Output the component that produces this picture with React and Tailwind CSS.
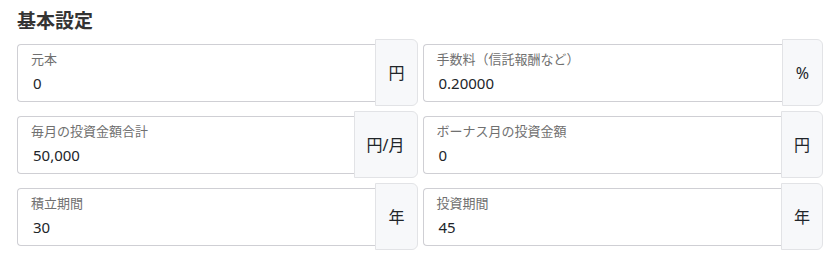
import React from "react";

const fields = [
  { label: "元本", value: "0", unit: "円" },
  { label: "手数料（信託報酬など）", value: "0.20000", unit: "%" },
  { label: "毎月の投資金額合計", value: "50,000", unit: "円/月" },
  { label: "ボーナス月の投資金額", value: "0", unit: "円" },
  { label: "積立期間", value: "30", unit: "年" },
  { label: "投資期間", value: "45", unit: "年" },
];

const Field = ({ label, value, unit }) => (
  <div className="flex items-center h-[67px]">
    <div className="flex-1 h-[58px] border border-[#cfcfd4] border-r-0 rounded-l-[4px] bg-white pl-[13px] pt-[5px]">
      <div className="text-[13px] leading-[18px] text-[#707070]">{label}</div>
      <div className="text-[15px] leading-[20px] text-[#212529] mt-[5px] pl-[2px]">{value}</div>
    </div>
    <div className="h-[67px] min-w-[41px] px-[12px] flex items-center justify-center border border-[#e2e3e6] rounded-r-[6px] bg-[#f7f8fa] text-[16px] text-[#212529]">
      {unit}
    </div>
  </div>
);

export default function App() {
  return (
    <div
      className="w-[834px] h-[264px] bg-white pl-[17px] pr-[11px] pt-[8px]"
      style={{ fontFamily: '"Noto Sans", "Noto Sans CJK JP", sans-serif' }}
    >
      <h2 className="text-[19px] leading-[26px] font-bold text-[#333333]">基本設定</h2>
      <div className="grid grid-cols-2 gap-x-[5px] gap-y-[5px] mt-[5px]">
        {fields.map((f, i) => (
          <Field key={i} {...f} />
        ))}
      </div>
    </div>
  );
}
